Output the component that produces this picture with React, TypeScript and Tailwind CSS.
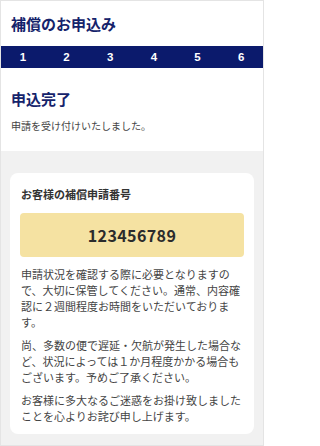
import React from 'react';

const steps = [1, 2, 3, 4, 5, 6];

export default function App() {
  return (
    <div
      className="w-[264px] h-[446px] overflow-hidden border border-[#e4e4e4] bg-[#f1f1f1] text-[#333]"
      style={{ fontFamily: '"Noto Sans CJK JP", "Noto Sans", sans-serif' }}
    >
      {/* Header */}
      <div className="bg-white">
        <div className="h-[45px] px-[10px] pt-[12px]">
          <h1 className="text-[15px] leading-[22px] font-bold text-[#15236b]">補償のお申込み</h1>
        </div>
        <ol className="grid grid-cols-6 h-[22px] bg-[#0b1a6c] text-white text-[11.5px] leading-[22px] font-bold text-center"
          style={{ fontFamily: '"Liberation Sans", Arial, sans-serif' }}>
          {steps.map((s) => (
            <li key={s}>{s}</li>
          ))}
        </ol>
        <div className="h-[83px] px-[10px] pt-[20px]">
          <h2 className="text-[15px] leading-[22px] font-bold text-[#15236b]">申込完了</h2>
          <p className="mt-[8px] text-[10px] leading-[16px] text-[#444]">申請を受け付けいたしました。</p>
        </div>
      </div>

      {/* Result card */}
      <div className="px-[9px] pt-[22px]">
        <div className="bg-white rounded-[8px] px-[10px] pt-[13px] pb-[10px]">
          <p className="px-[1px] text-[11px] leading-[16px] font-bold text-[#333]">お客様の補償申請番号</p>
          <div className="mt-[11px] h-[44px] rounded-[4px] bg-[#f5e2a2] flex items-center justify-center">
            <span className="text-[16px] font-bold text-[#2b2b2b] tracking-[0.4px]">123456789</span>
          </div>
          <div className="px-[1px] text-[11px] leading-[16px] text-[#444]">
            <p className="mt-[9px]">
              申請状況を確認する際に必要となりますので、大切に保管してください。通常、内容確認に２週間程度お時間をいただいております。
            </p>
            <p className="mt-[7px]">
              尚、多数の便で遅延・欠航が発生した場合など、状況によっては１か月程度かかる場合もございます。予めご了承ください。
            </p>
            <p className="mt-[7px]">
              お客様に多大なるご迷惑をお掛け致しましたことを心よりお詫び申し上げます。
            </p>
          </div>
        </div>
      </div>
    </div>
  );
}
